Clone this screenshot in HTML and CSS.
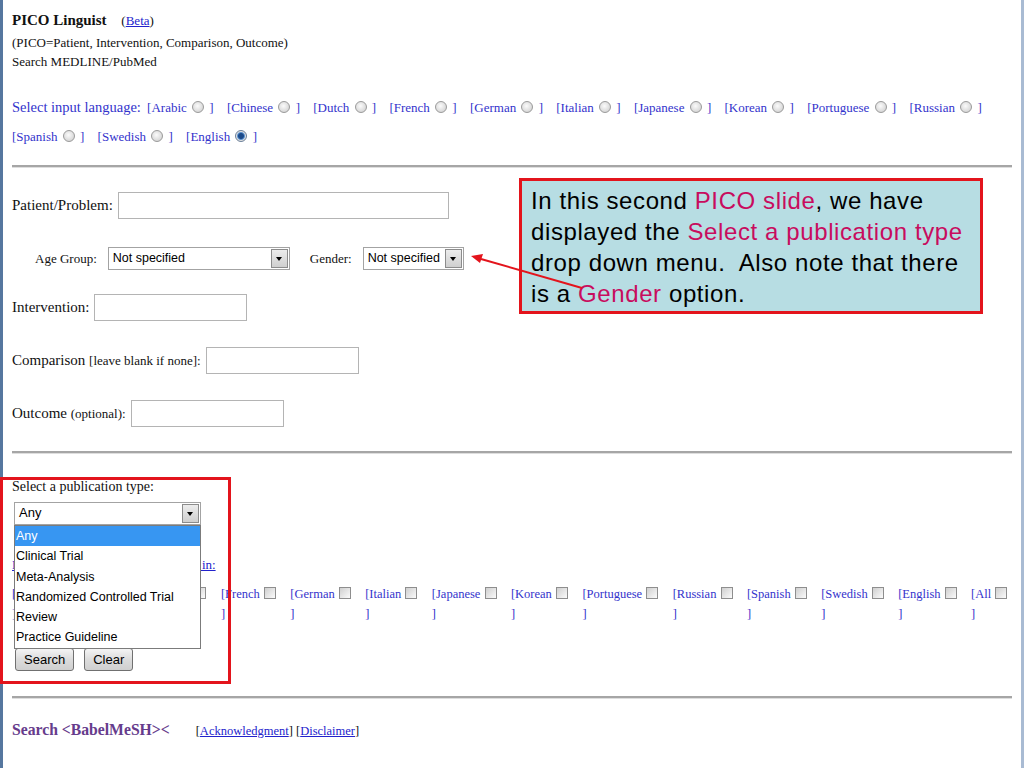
FILE: index.html
```html
<!DOCTYPE html>
<html lang="en">
<head>
  <meta charset="UTF-8">
  <title>PICO Linguist</title>
  <link rel="stylesheet" href="styles.css">
</head>
<body>

<div class="slide">

  <div class="page">

    <!-- Title block -->
    <div class="header">
      <div class="title"><b>PICO Linguist</b> <span class="beta">(<a href="#">Beta</a>)</span></div>
      <div class="sub">(PICO=Patient, Intervention, Comparison, Outcome)</div>
      <div class="sub">Search MEDLINE/PubMed</div>
    </div>

    <!-- Input language -->
    <div class="input-lang">
      <span class="lang-label">Select input language:</span>
      <span class="opt">[Arabic <input type="radio" name="lang"> ]</span>
      <span class="opt">[Chinese <input type="radio" name="lang"> ]</span>
      <span class="opt">[Dutch <input type="radio" name="lang"> ]</span>
      <span class="opt">[French <input type="radio" name="lang"> ]</span>
      <span class="opt">[German <input type="radio" name="lang"> ]</span>
      <span class="opt">[Italian <input type="radio" name="lang"> ]</span>
      <span class="opt">[Japanese <input type="radio" name="lang"> ]</span>
      <span class="opt">[Korean <input type="radio" name="lang"> ]</span>
      <span class="opt">[Portuguese <input type="radio" name="lang"> ]</span>
      <span class="opt">[Russian <input type="radio" name="lang"> ]</span>
      <span class="opt">[Spanish <input type="radio" name="lang"> ]</span>
      <span class="opt">[Swedish <input type="radio" name="lang"> ]</span>
      <span class="opt">[English <input type="radio" name="lang" checked> ]</span>
    </div>

    <hr>

    <!-- PICO fields -->
    <div class="form">
      <div class="row">
        <label class="big">Patient/Problem:</label>
        <input type="text" class="field wide">
      </div>
      <div class="row indent">
        <label class="small">Age Group:</label>
        <div class="select age"><span class="select-text">Not specified</span><span class="select-btn"></span></div>
        <label class="small gender-label">Gender:</label>
        <div class="select gender"><span class="select-text">Not specified</span><span class="select-btn"></span></div>
      </div>
      <div class="row">
        <label class="big">Intervention:</label>
        <input type="text" class="field">
      </div>
      <div class="row">
        <label class="big">Comparison <span class="note">[leave blank if none]:</span></label>
        <input type="text" class="field">
      </div>
      <div class="row">
        <label class="big">Outcome <span class="note">(optional):</span></label>
        <input type="text" class="field">
      </div>
    </div>

    <hr>

    <!-- Publication type + output languages -->
    <div class="pub">
      <div class="pub-label">Select a publication type:</div>
      <div class="select pub-select">
        <span class="select-text">Any</span><span class="select-btn"></span>
        <ul class="dropdown">
          <li class="active">Any</li>
          <li>Clinical Trial</li>
          <li>Meta-Analysis</li>
          <li>Randomized Controlled Trial</li>
          <li>Review</li>
          <li>Practice Guideline</li>
        </ul>
      </div>

      <div class="out-link"><a href="#">Limit your search to articles written in:</a></div>

      <div class="out-langs">
        <div class="cell">[Arabic <input type="checkbox"><br>]</div>
        <div class="cell">[Chinese <input type="checkbox"><br>]</div>
        <div class="cell">[Dutch <input type="checkbox"><br>]</div>
        <div class="cell">[French <input type="checkbox"><br>]</div>
        <div class="cell">[German <input type="checkbox"><br>]</div>
        <div class="cell">[Italian <input type="checkbox"><br>]</div>
        <div class="cell">[Japanese <input type="checkbox"><br>]</div>
        <div class="cell">[Korean <input type="checkbox"><br>]</div>
        <div class="cell">[Portuguese <input type="checkbox"><br>]</div>
        <div class="cell">[Russian <input type="checkbox"><br>]</div>
        <div class="cell">[Spanish <input type="checkbox"><br>]</div>
        <div class="cell">[Swedish <input type="checkbox"><br>]</div>
        <div class="cell">[English <input type="checkbox"><br>]</div>
        <div class="cell">[All <input type="checkbox"><br>]</div>
      </div>

      <div class="buttons">
        <button>Search</button>
        <button>Clear</button>
      </div>
    </div>

    <hr>

    <div class="footer">
      <span class="babel">Search &lt;BabelMeSH&gt;&lt;</span>
      <span class="links">[<a href="#">Acknowledgment</a>] [<a href="#">Disclaimer</a>]</span>
    </div>

  </div>

  <!-- Slide annotations -->
  <div class="callout">
    In this second <span class="hl">PICO slide</span>, we have<br>
    displayed the <span class="hl">Select a publication type</span><br>
    drop down menu.&nbsp; Also note that there<br>
    is a <span class="hl">Gender</span> option.
  </div>

  <svg class="arrow" width="125" height="50" viewBox="0 0 125 50">
    <line x1="117" y1="43" x2="16" y2="14" stroke="#e3141c" stroke-width="2"/>
    <polygon points="6,11 18,9 15,18" fill="#e3141c"/>
  </svg>

  <div class="highlight"></div>

</div>

</body>
</html>
```

FILE: styles.css
```css
* {
  box-sizing: border-box;
}

body {
  margin: 0;
  background: #fff;
}

.slide {
  position: relative;
  width: 1024px;
  height: 768px;
  overflow: hidden;
}

.page {
  height: 768px;
  border-left: 3px solid #56779f;
  border-right: 3px solid #a9bbd3;
  padding: 0 9px;
  font-family: "Liberation Serif", "Times New Roman", serif;
  color: #111;
}

a {
  color: #2222cc;
}

hr {
  height: 0;
  margin: 0;
  border: none;
  border-top: 2px solid #a6a6a6;
  border-bottom: 1px solid #dedede;
}

/* Title block */
.header {
  padding-top: 8px;
}

.title {
  font-size: 15px;
  line-height: 24px;
}

.beta {
  font-size: 13px;
  margin-left: 11px;
}

.sub {
  font-size: 13px;
  line-height: 19px;
}

/* Input language */
.input-lang {
  margin-top: 22px;
  margin-bottom: 14px;
  line-height: 29px;
  color: #3333cc;
  font-size: 13px;
}

.lang-label {
  font-size: 14.5px;
  margin-right: 3px;
}

.opt {
  margin-right: 10px;
  white-space: nowrap;
}

input[type="radio"] {
  appearance: none;
  width: 12px;
  height: 12px;
  margin: 0 2px;
  vertical-align: -1px;
  border: 1px solid #9a9a9a;
  border-radius: 50%;
  background: radial-gradient(circle at 45% 40%, #fbfbfb, #cacaca);
}

input[type="radio"]:checked {
  border-color: #6b7f99;
  background: radial-gradient(circle, #1d4b8a 0 2.5px, #5d93d0 3.5px, #e4e4e4 4.5px, #c4c4c4);
}

input[type="checkbox"] {
  appearance: none;
  width: 12px;
  height: 12px;
  margin: 0 0 0 1px;
  vertical-align: -1px;
  border: 1px solid #8e8e8e;
  background: linear-gradient(135deg, #cfcfcf, #fbfbfb);
}

/* PICO fields */
.form {
  padding-top: 24px;
  padding-bottom: 24px;
  display: flex;
  flex-direction: column;
  gap: 26px;
}

.row {
  display: flex;
  align-items: center;
  height: 27px;
}

.row.indent {
  padding-left: 23px;
  height: 23px;
  margin-top: 2px;
  margin-bottom: -2px;
}

.big {
  font-size: 15px;
}

.small {
  font-size: 13px;
}

.note {
  font-size: 13px;
}

.field {
  width: 153px;
  height: 27px;
  margin-left: 5px;
  border: 1px solid #b4b4b4;
  background: #fff;
}

.field.wide {
  width: 331px;
}

.select {
  display: flex;
  height: 23px;
  border: 1px solid #a3a3a3;
  background: #fff;
  font-family: "Liberation Sans", Arial, sans-serif;
  font-size: 12.5px;
  color: #000;
}

.select-text {
  flex: 1;
  padding-left: 4px;
  line-height: 20px;
}

.select-btn {
  position: relative;
  width: 17px;
  margin: 1px;
  border: 1px solid #8c8c8c;
  background: linear-gradient(#ececec, #cfcfcf);
}

.select-btn::after {
  content: "";
  position: absolute;
  left: 4px;
  top: 7px;
  border-left: 3.5px solid transparent;
  border-right: 3.5px solid transparent;
  border-top: 4px solid #000;
}

.select.age {
  width: 182px;
  margin-left: 11px;
}

.gender-label {
  margin-left: 20px;
}

.select.gender {
  width: 101px;
  margin-left: 11px;
}

/* Publication type */
.pub {
  padding-top: 24px;
  padding-bottom: 25px;
}

.pub-label {
  font-size: 14px;
  line-height: 18px;
}

.select.pub-select {
  position: relative;
  width: 187px;
  margin: 6px 0 0 2px;
}

.select.pub-select .select-text {
  font-size: 13px;
}

.dropdown {
  position: absolute;
  top: 22px;
  left: -1px;
  width: 187px;
  margin: 0;
  padding: 0;
  list-style: none;
  border: 1px solid #7b7b7b;
  background: #fff;
  z-index: 2;
}

.dropdown li {
  height: 20.3px;
  line-height: 21px;
  padding-left: 1px;
  font-size: 12.5px;
}

.dropdown li.active {
  background: #3796f2;
  color: #fff;
}

.out-link {
  margin-top: 30px;
  font-size: 13px;
  line-height: 20px;
}

.out-langs {
  display: flex;
  gap: 14.4px;
  margin-top: 9px;
  font-size: 12.5px;
  line-height: 20px;
  color: #3333cc;
  white-space: nowrap;
}

.buttons {
  display: flex;
  gap: 10px;
  margin-top: 24px;
  padding-left: 3px;
}

button {
  height: 23px;
  padding: 0 8px;
  border: 1px solid #707070;
  border-radius: 3px;
  background: linear-gradient(#f4f4f4, #dcdcdc 50%, #cfcfcf);
  font-family: "Liberation Sans", Arial, sans-serif;
  font-size: 13px;
  color: #000;
}

/* Footer */
.footer {
  padding-top: 22px;
  display: flex;
  align-items: baseline;
  gap: 26px;
}

.babel {
  font-size: 15.7px;
  font-weight: bold;
  color: #663c8c;
}

.links {
  font-size: 12.5px;
}

/* Slide annotations */
.callout {
  position: absolute;
  left: 519px;
  top: 178px;
  width: 464px;
  height: 136px;
  padding: 4px 0 0 9px;
  border: 3px solid #e3141c;
  background: #b7dde3;
  font-family: "Liberation Sans", Arial, sans-serif;
  font-size: 24px;
  letter-spacing: 0.6px;
  line-height: 31px;
  color: #000;
}

.callout .hl {
  color: #c80c5e;
}

.arrow {
  position: absolute;
  left: 465px;
  top: 245px;
  z-index: 3;
}

.highlight {
  position: absolute;
  left: 0;
  top: 477px;
  width: 231px;
  height: 207px;
  border: 3px solid #e3141c;
  z-index: 3;
}
```
